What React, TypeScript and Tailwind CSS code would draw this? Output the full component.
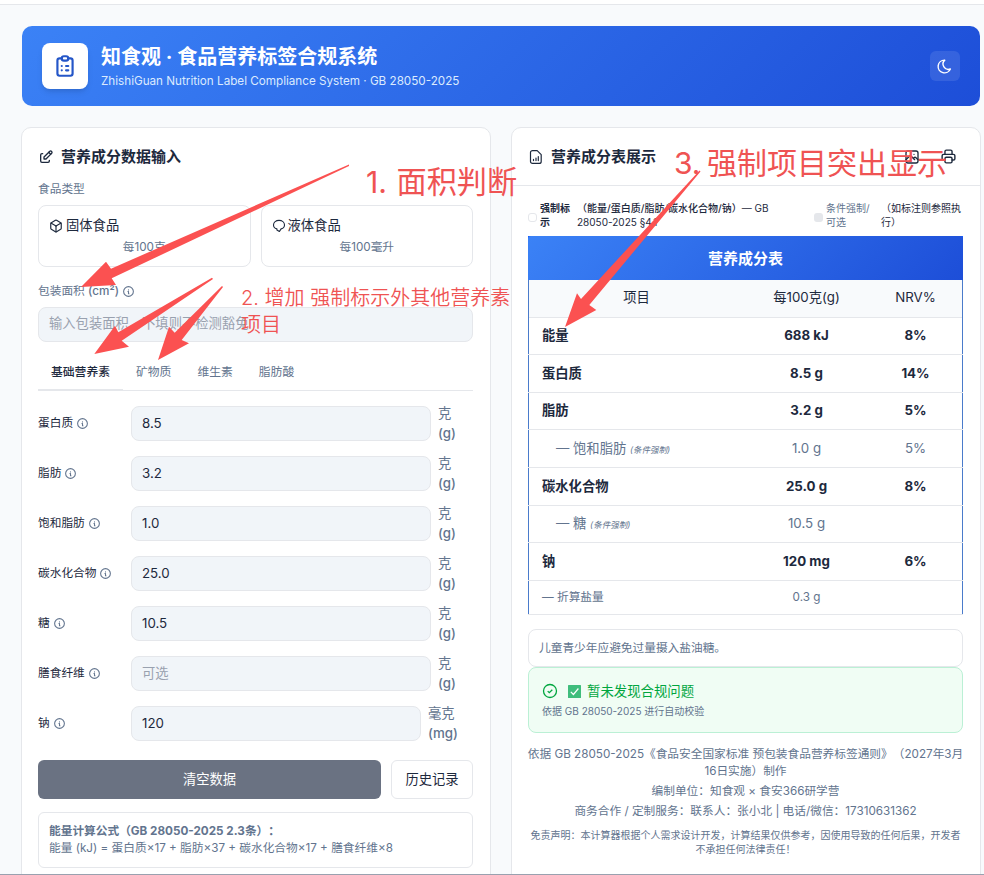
import React from "react";
import {
  TbClipboardList,
  TbCube,
  TbEdit,
  TbInfoCircle,
  TbMoon,
  TbPhoto,
  TbPrinter,
} from "react-icons/tb";

const nutrients = [
  { label: "蛋白质", value: "8.5", unit: ["克", "(g)"] },
  { label: "脂肪", value: "3.2", unit: ["克", "(g)"] },
  { label: "饱和脂肪", value: "1.0", unit: ["克", "(g)"] },
  { label: "碳水化合物", value: "25.0", unit: ["克", "(g)"] },
  { label: "糖", value: "10.5", unit: ["克", "(g)"] },
  { label: "膳食纤维", value: "", unit: ["克", "(g)"] },
  { label: "钠", value: "120", unit: ["毫克", "(mg)"] },
];

const rows = [
  { name: "能量", amount: "688 kJ", nrv: "8%", height: "h-[37px]" },
  { name: "蛋白质", amount: "8.5 g", nrv: "14%", height: "h-[38px]" },
  { name: "脂肪", amount: "3.2 g", nrv: "5%", height: "h-[37px]" },
  { name: "饱和脂肪", amount: "1.0 g", nrv: "5%", sub: true, height: "h-[38px]" },
  { name: "碳水化合物", amount: "25.0 g", nrv: "8%", height: "h-[38px]" },
  { name: "糖", amount: "10.5 g", nrv: "", sub: true, height: "h-[37px]" },
  { name: "钠", amount: "120 mg", nrv: "6%", height: "h-[38px]" },
];

const Header = () => (
  <header className="flex h-20 items-center rounded-[10px] bg-[linear-gradient(135deg,#3b82f6,#1d4ed8)] px-5">
    <div className="flex size-[46px] items-center justify-center rounded-lg bg-white text-[#2456c8] shadow-md">
      <TbClipboardList size={26} />
    </div>
    <div className="ml-[13px] flex-1 pt-[3px] whitespace-nowrap">
      <h1 className="text-[20px] leading-[27px] font-bold text-white">
        知食观 · 食品营养标签合规系统
      </h1>
      <p className="text-[11.68px] leading-5 text-blue-100">
        ZhishiGuan Nutrition Label Compliance System · GB 28050-2025
      </p>
    </div>
    <button className="flex size-[30px] items-center justify-center rounded-md bg-white/10 pr-0.5 text-white">
      <TbMoon size={17} />
    </button>
  </header>
);

const InputPanel = () => (
  <section className="h-[760px] w-[470px] rounded-[10px] border border-gray-200 bg-white pt-[14px] pr-[17px] pl-4">
    <div className="flex h-[30px] items-center gap-[7px]">
      <TbEdit size={16} />
      <h2 className="text-[15px] font-semibold">营养成分数据输入</h2>
    </div>
    <div className="mt-1.5 h-5 text-[11.7px] leading-[22px] text-slate-500">食品类型</div>
    <div className="mt-[7px] grid grid-cols-2 gap-2.5">
      <div className="h-[62px] rounded-lg border border-gray-200 px-2.5 pt-2.5">
        <div className="flex h-5 items-center gap-[3px] text-[13.3px]">
          <TbCube size={14} />
          固体食品
        </div>
        <div className="mt-px text-center text-[11.7px] leading-5 text-slate-500">每100克</div>
      </div>
      <div className="h-[62px] rounded-lg border border-gray-200 px-2.5 pt-2.5">
        <div className="flex h-5 items-center gap-0.5 text-[13.3px]">
          <svg
            width="14"
            height="14"
            viewBox="0 0 14 14"
            fill="none"
            stroke="currentColor"
            strokeWidth="1.1"
            strokeLinejoin="round"
          >
            <path d="M4.9 9.9C2.8 9.3 1.5 7.8 1.5 5.9 1.5 3.3 4 1.4 7 1.4s5.5 1.9 5.5 4.5c0 1.9-1.3 3.4-3.4 4L7.4 12.5 4.9 11z" />
          </svg>
          液体食品
        </div>
        <div className="mt-px text-center text-[11.7px] leading-5 text-slate-500">每100毫升</div>
      </div>
    </div>
    <div className="mt-[14px] flex h-5 items-center gap-[3px] text-[11.7px] text-slate-500">
      <span className="pt-0.5">
        包装面积 <span className="font-medium">(cm²)</span>
      </span>
      <TbInfoCircle size={13} className="mt-px" />
    </div>
    <div className="mt-1.5 h-[35px] rounded-lg border border-gray-200 bg-slate-100 px-2.5 text-[13.3px] leading-[31px] text-gray-400">
      输入包装面积，不填则不检测豁免
    </div>
    <div className="mt-3 flex h-[37px] border-b border-gray-200 text-[11.8px] text-slate-500">
      <div className="-mb-px border-b-2 border-gray-200 px-[13px] pt-2.5 font-medium text-slate-800">
        基础营养素
      </div>
      <div className="px-[13px] pt-2.5">矿物质</div>
      <div className="px-[13px] pt-2.5">维生素</div>
      <div className="px-[13px] pt-2.5">脂肪酸</div>
    </div>
    <div className="flex flex-col gap-2.5 pt-3">
      {nutrients.map((n) => (
        <div key={n.label} className="flex h-10 items-center">
          <div className="flex w-[93px] items-center gap-[3px] pt-0.5 text-[11.7px]">
            {n.label}
            <TbInfoCircle size={13} className="text-slate-500" />
          </div>
          <div className="h-[35px] flex-1 rounded-lg border border-gray-200 bg-slate-100 px-2.5 text-[13.3px] leading-[33px]">
            {n.value || <span className="text-gray-400">可选</span>}
          </div>
          <div
            className={`ml-[7px] text-[13.3px] leading-5 text-slate-500 ${
              n.unit[0] === "克" ? "w-[35px]" : "w-[45px]"
            }`}
          >
            <div>{n.unit[0]}</div>
            <div className="font-medium">{n.unit[1]}</div>
          </div>
        </div>
      ))}
    </div>
    <div className="mt-[17px] flex gap-2.5 text-[13.3px]">
      <button className="h-[39px] flex-1 rounded-md bg-gray-500 text-white">清空数据</button>
      <button className="h-[39px] w-[82px] rounded-md border border-gray-200">历史记录</button>
    </div>
    <div className="mt-[13px] h-14 rounded-md border border-gray-200 px-2.5 pt-[10px] text-[11.7px] leading-[17px] whitespace-nowrap text-slate-500">
      <div className="font-bold">能量计算公式（GB 28050-2025 2.3条）：</div>
      <div>能量 (kJ) = 蛋白质×17 + 脂肪×37 + 碳水化合物×17 + 膳食纤维×8</div>
    </div>
  </section>
);

const LabelTable = () => (
  <div className="mt-1 border-x border-[#4a7bcb] text-[13.3px]">
    <div className="-mx-px bg-blue-600">
      <div className="h-11 rounded-t-[3px] bg-[linear-gradient(135deg,#3b82f6,#1d4ed8)] text-center text-[15px] leading-[45px] font-semibold text-white">
        营养成分表
      </div>
    </div>
    <div className="grid h-[38px] grid-cols-[215px_125px_93px] items-center border-b border-gray-200 bg-slate-50 pb-0.5 text-center">
      <div>项目</div>
      <div>每100克(g)</div>
      <div>NRV%</div>
    </div>
    {rows.map((r) => (
      <div
        key={r.name}
        className={`-mx-px grid grid-cols-[215px_125px_93px] items-center border-b border-gray-200 px-px text-center ${r.height} ${
          r.sub ? "text-slate-500" : "font-bold"
        }`}
      >
        {r.sub ? (
          <div className="pl-[27px] text-left">
            — {r.name} <span className="text-[8.5px] italic">(条件强制)</span>
          </div>
        ) : (
          <div className="pl-[13px] text-left">{r.name}</div>
        )}
        <div>{r.amount}</div>
        <div>{r.nrv}</div>
      </div>
    ))}
    <div className="-mx-px grid h-[34px] grid-cols-[215px_125px_93px] items-center border-b border-gray-200 px-px text-center text-[11.7px] text-slate-500">
      <div className="pl-[13px] text-left">— 折算盐量</div>
      <div>0.3 g</div>
      <div />
    </div>
  </div>
);

const DisplayPanel = () => (
  <section className="h-[760px] w-[470px] rounded-[10px] border border-gray-200 bg-white">
    <div className="flex h-[58px] items-center border-b border-gray-200 pr-[23px] pl-[17px]">
      <svg
        width="14"
        height="16"
        viewBox="0 0 14 16"
        fill="none"
        stroke="currentColor"
        strokeWidth="1.2"
        strokeLinecap="round"
        strokeLinejoin="round"
      >
        <path d="M3.5 1.6h4.7l4 4v6.8a2 2 0 0 1-2 2H3.5a2 2 0 0 1-2-2V3.6a2 2 0 0 1 2-2z" />
        <path d="M4.5 11.6v-1.2M7 11.6V9M9.3 11.6V7.5" />
      </svg>
      <h2 className="ml-2 flex-1 pt-px text-[15px] font-semibold">营养成分表展示</h2>
      <TbPhoto size={16} />
      <TbPrinter size={17} className="ml-5" />
    </div>
    <div className="pt-4 pr-[17px] pl-4">
      <div className="flex h-[30px] items-center text-[10px] leading-[14px] whitespace-nowrap">
        <div className="size-[9px] rounded-[3px] border border-gray-200" />
        <div className="ml-[3px] w-[37px] pb-1 font-bold">
          强制标
          <br />示
        </div>
        <div className="w-[237px] pb-1">
          <span className="font-medium">（能量/蛋白质/脂肪/碳水化合物/钠）</span>— GB
          <br />
          28050-2025 §4.1
        </div>
        <div className="size-[9px] rounded-[3px] bg-gray-200" />
        <div className="ml-[3px] w-[55px] pb-1 text-slate-500">
          条件强制/
          <br />
          可选
        </div>
        <div className="pb-1">
          （如标注则参照执
          <br />
          行）
        </div>
      </div>
      <LabelTable />
      <div className="mt-[14px] h-[38px] rounded-lg border border-gray-200 px-2.5 text-[11.7px] leading-[36px] text-slate-500">
        儿童青少年应避免过量摄入盐油糖。
      </div>
      <div className="h-[66px] rounded-lg border border-[#bbf0d5] bg-green-50 px-[13px] pt-[13px]">
        <div className="flex h-5 items-center text-[13.4px] text-green-600">
          <svg width="16" height="16" viewBox="0 0 16 16" fill="none" stroke="currentColor" strokeWidth="1.3">
            <circle cx="8" cy="8" r="6.5" />
            <path d="M5.7 8.1l1.6 1.6 3-3" />
          </svg>
          <svg width="13" height="13" viewBox="0 0 13 13" className="mr-[6px] ml-[10px]">
            <rect width="13" height="13" rx="0.5" fill="#3fbd7c" />
            <path d="M2.8 6.8l2.6 2.7 5-6" fill="none" stroke="#fff" strokeWidth="1.2" />
          </svg>
          暂未发现合规问题
        </div>
        <div className="mt-[3px] text-[10px] leading-[14px] text-slate-500">
          依据 GB 28050-2025 进行自动校验
        </div>
      </div>
      <div className="-mx-3 mt-3 text-center text-[11.7px] leading-[17px] whitespace-nowrap text-slate-500">
        <p className="pt-px">依据 GB 28050-2025《食品安全国家标准 预包装食品营养标签通则》（2027年3月</p>
        <p>16日实施）制作</p>
        <p className="mt-[3px]">编制单位：知食观 × 食安366研学营</p>
        <p className="mt-[3px]">商务合作 / 定制服务：联系人：张小北 | 电话/微信：17310631362</p>
        <div className="mt-2 text-[10px] leading-[14px]">
          <p>免责声明：本计算器根据个人需求设计开发，计算结果仅供参考，因使用导致的任何后果，开发者</p>
          <p>不承担任何法律责任！</p>
        </div>
      </div>
    </div>
  </section>
);

// Review notes drawn on top of the page
const Annotations = () => (
  <div className="pointer-events-none absolute inset-0 whitespace-nowrap text-[#ef5353]">
    <svg width="984" height="875" className="absolute inset-0" fill="#fb5151">
      <polygon points="349,164.5 349,166 111.7,278.3 116,285 81,287 106,261.7 111,268.7" />
      <polygon points="212,277.8 213,279 121.7,340.7 129,346.7 94.3,354 115,325.7 118.3,332.3" />
      <polygon points="222,286 223,287 181.7,340 189,343.3 158,360 169,326.7 174.7,332.7" />
      <polygon points="699.5,170.5 700.5,171.5 589.3,305 596.3,310 565,327 577,293.3 581,299" />
    </svg>
    <div className="absolute top-[161px] left-[366px] text-[30.2px] leading-[42px] [word-spacing:1px]">
      1. 面积判断
    </div>
    <div className="absolute top-[285px] left-[241px] text-[20px] leading-[27px] font-[350]">
      2. 增加 强制标示外其他营养素
      <br />
      项目
    </div>
    <div className="absolute top-[142px] left-[674px] text-[30px] leading-[42px] [word-spacing:-2px]">
      3. 强制项目突出显示
    </div>
  </div>
);

const App = () => {
  return (
    <div className="relative h-[875px] w-[984px] overflow-hidden bg-slate-50 font-['Inter','Noto_Sans_CJK_SC',sans-serif] text-slate-800 [text-spacing-trim:space-all]">
      <div className="h-[5px] border-b border-gray-200 bg-white" />
      <main className="pt-[21px] pr-1 pl-[22px]">
        <Header />
        <div className="mt-[21px] -mr-px -ml-px flex justify-between">
          <InputPanel />
          <DisplayPanel />
        </div>
      </main>
      <div className="absolute inset-x-0 bottom-0 h-px bg-gray-400" />
      <Annotations />
    </div>
  );
};

export default App;
